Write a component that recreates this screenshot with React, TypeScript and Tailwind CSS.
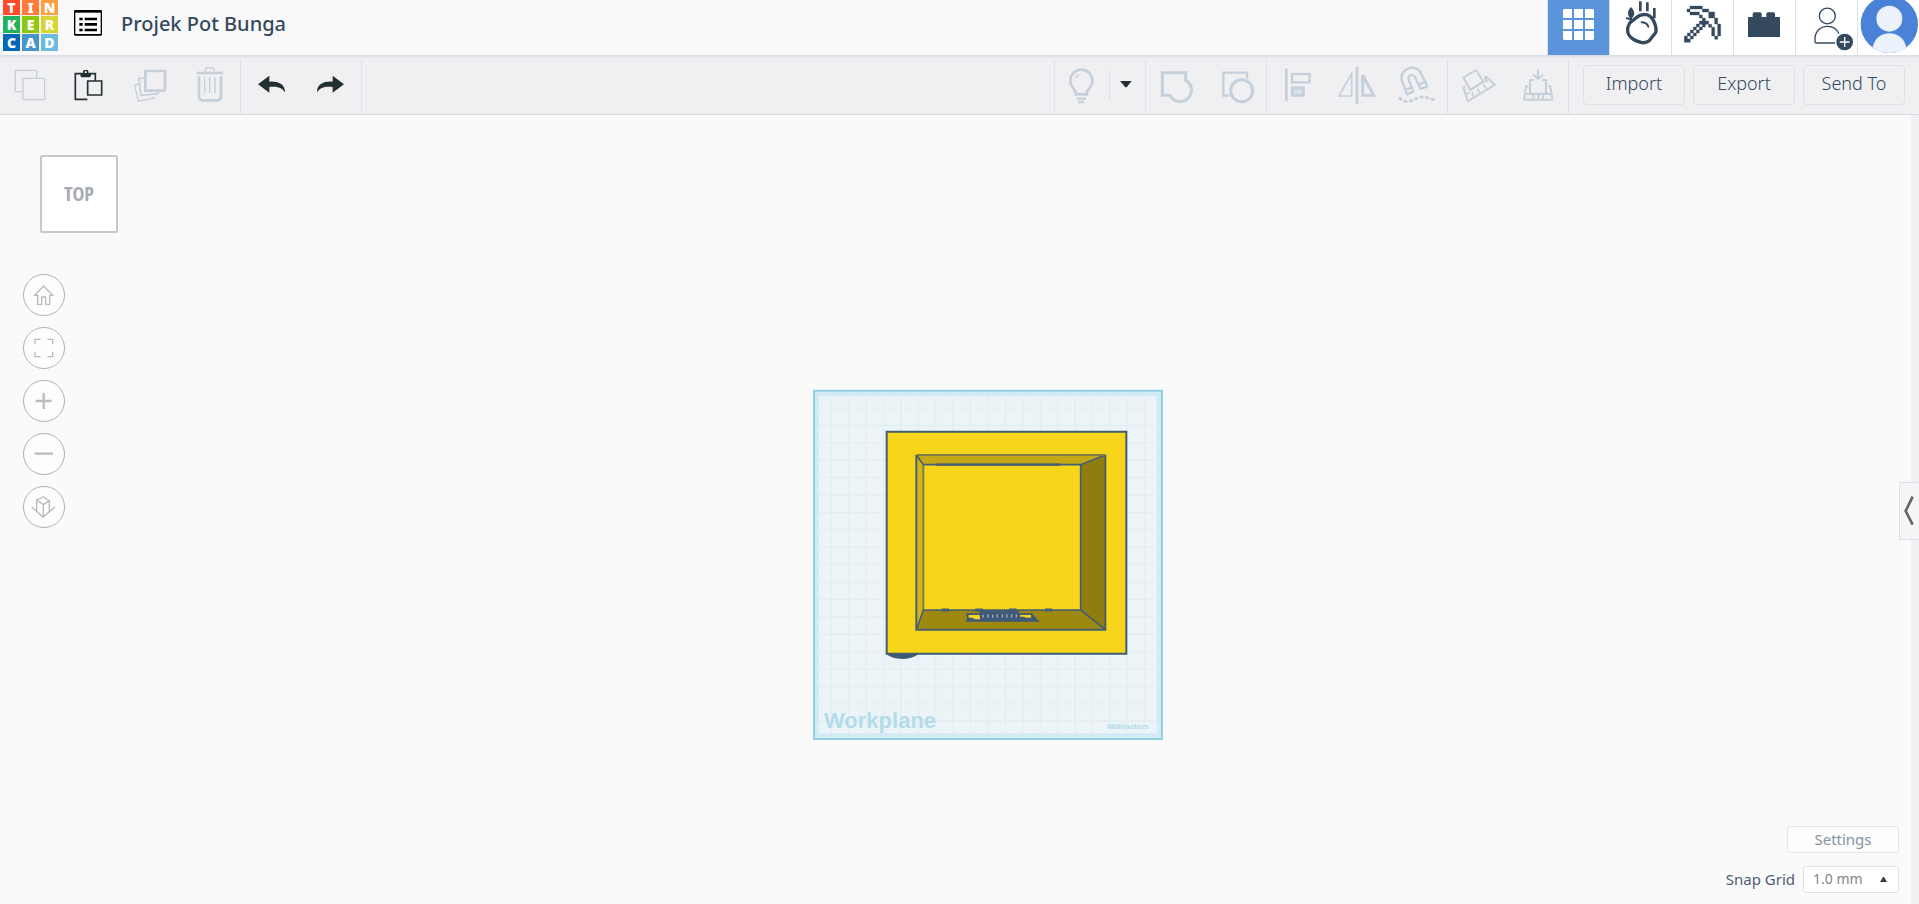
import type { ReactNode } from "react";

type ToolProps = { label: string; box: string; children: ReactNode; dark?: boolean };

function Tool({ label, box, children, dark = false }: ToolProps) {
  return (
    <button
      type="button"
      aria-label={label}
      className={`h-[59px] w-[60px] shrink-0 ${dark ? "text-[#22302f]" : "text-[#c5d0db]"}`}
    >
      <svg viewBox={box} className="h-[59px] w-[60px]" fill="none" stroke="currentColor" strokeWidth="5">
        {children}
      </svg>
    </button>
  );
}

function Group({ children, className }: { children: ReactNode; className: string }) {
  return <div className={`flex shrink-0 ${className}`}>{children}</div>;
}

function HeaderTab({ label, box, children, active = false }: { label: string; box: string; children: ReactNode; active?: boolean }) {
  return (
    <button
      type="button"
      aria-label={label}
      className={`h-[55px] w-[62px] shrink-0 border-l border-[#dcdfe8] text-[#34495e] ${active ? "bg-[#5b94da]" : "bg-white"}`}
    >
      <svg viewBox={box} className="h-[55px] w-[61px]" fill="none" stroke="currentColor">
        {children}
      </svg>
    </button>
  );
}

const logoTiles = [
  { letter: "T", color: "bg-[#ff4b2b]" },
  { letter: "I", color: "bg-[#ff7a3d]" },
  { letter: "N", color: "bg-[#ff9f40]" },
  { letter: "K", color: "bg-[#22b25c]" },
  { letter: "E", color: "bg-[#8ec80e]" },
  { letter: "R", color: "bg-[#d5d534]" },
  { letter: "C", color: "bg-[#0069b9]" },
  { letter: "A", color: "bg-[#4497ca]" },
  { letter: "D", color: "bg-[#6dbbde]" },
];

function Logo() {
  return (
    <a
      href="#home"
      aria-label="Tinkercad"
      className="ml-[3px] grid shrink-0 grid-cols-3 grid-rows-[15px_17px_17px] gap-x-[2px] gap-y-px self-start bg-[#faf0e4]"
    >
      {logoTiles.map((t) => (
        <span
          key={t.letter}
          className={`flex w-[17px] items-center justify-center font-['Noto_Sans',sans-serif] text-[14px] leading-[15px] font-black text-white ${t.color}`}
        >
          {t.letter}
        </span>
      ))}
    </a>
  );
}

function Header() {
  return (
    <header className="flex h-[55px] items-center bg-[#f9f9f9]">
      <Logo />
      <button type="button" aria-label="Designs" className="mb-[9px] ml-[16px] shrink-0">
        <svg viewBox="222 30 84 78" className="h-[26px] w-[28px]">
          <path d="M222 34a4 4 0 0 1 4-4h76a4 4 0 0 1 4 4v69a4 4 0 0 1-4 4h-76a4 4 0 0 1-4-4z" fill="#000" />
          <path d="M226 38h76v64h-76z" fill="#fff" />
          <path d="M238 53h10v8h-10zM254 53h37v8h-37zM238 69h10v8h-10zM254 69h37v8h-37zM238 86h10v8h-10zM254 86h37v8h-37z" fill="#000" />
        </svg>
      </button>
      <h1 className="mb-[7px] ml-[19px] grow text-[20px] leading-6 font-medium text-[#34495e]">Projek Pot Bunga</h1>
      <nav aria-label="Views" className="flex shrink-0">
        <HeaderTab label="3D design" box="24 0 183 165" active>
          <path
            d="M72 27h24v27H69V30zM102 27h27v27h-27zM135 27h24l3 3v24h-27zM69 60h27v27H69zM102 60h27v27h-27zM135 60h27v27h-27zM69 93h27v27H72l-3-3zM102 93h27v27h-27zM135 93h27v24l-3 3h-24z"
            fill="#fff"
            stroke="none"
          />
        </HeaderTab>
        <HeaderTab label="Sim lab" box="210 0 183 165">
          <path d="M301 4v30M322 7v27M343 24v31" strokeWidth="8" />
          <path d="M273 21c-10 10-12 21-4 32h8c8-8 8-20-4-32z" fill="currentColor" stroke="none" />
          <path d="M258 55c6-1 14 3 21 10M273 48v10" strokeWidth="6" />
          <path d="M279 61c9-5 14-17 34-18 18 0 24 11 28 20 4 8 8 20 7 31-2 9-9 12-15 22-6 9-14 13-27 12-12-2-22-6-30-13-8-6-14-15-13-28 0-8 3-12 7-19z" strokeWidth="10" />
          <path d="M305 67c10 0 17 5 20 13" strokeWidth="6" strokeLinecap="round" />
        </HeaderTab>
        <HeaderTab label="Blocks" box="36 0 183 165">
          <path
            d="M90 18h37v9H90zM81 27h9v9h-9zM90 36h28v9H90zM127 27h19v9h-19zM146 36h18v18h-18zM118 45h9v9h-9zM127 54h9v9h-9zM118 63h28v10h-28zM127 73h9v8h-9zM164 54h9v18h-9zM173 72h9v36h-9zM164 108h9v10h-9zM146 73h9v9h-9zM155 82h9v26h-9zM109 72h9v9h-9zM100 81h9v9h-9zM91 90h9v9h-9zM82 99h9v9h-9zM73 108h9v9h-9zM118 81h9v9h-9zM109 90h9v9h-9zM100 99h9v9h-9zM91 108h9v9h-9zM73 117h18v10H73z"
            fill="currentColor"
            strokeWidth="1"
          />
        </HeaderTab>
        <HeaderTab label="Bricks" box="582 0 183 165">
          <path d="M624 54q0-3 3-3h11v-9q0-5 5-5h17q5 0 5 5v9h14v-9q0-5 5-5h16q5 0 5 5v9h12q3 0 3 3v57h-96z" fill="currentColor" stroke="none" />
        </HeaderTab>
        <HeaderTab label="Invite people" box="768 0 183 165">
          <ellipse cx="862" cy="48" rx="24" ry="23.500" strokeWidth="4" />
          <path d="M884 129h-55q-4 0-4-4v-9c0-22 17-37 37-37 16 0 28 8 34 21" strokeWidth="4" strokeLinecap="round" />
          <circle cx="914" cy="126" r="25" fill="currentColor" stroke="none" />
          <path d="M899 126h30M914 111v30" stroke="#fff" strokeWidth="4" />
        </HeaderTab>
        <HeaderTab label="Account" box="954 0 183 165">
          <circle cx="1048" cy="73" r="86" fill="#4a82d8" stroke="none" />
          <circle cx="1048" cy="56" r="39" fill="#ecf2fb" stroke="none" />
          <path d="M998 142c5-26 25-42 50-42s46 16 51 42c-14 11-31 17-51 17s-37-6-50-17z" fill="#ecf2fb" stroke="none" />
        </HeaderTab>
      </nav>
    </header>
  );
}

function Toolbar() {
  return (
    <div className="relative flex h-[60px] items-stretch border-b border-[#dadce5] bg-[#f0f0f2]">
      <div className="pointer-events-none absolute inset-x-0 top-0 h-[4px] bg-linear-to-b from-[#d8dbe5] to-[#f0f0f2]" />
      <Group className="border-r border-[#dee1e8]">
        <Tool label="Copy" box="0 165 180 177">
          <path d="M68 275H46v-64h64v22M69 235h65v64H69z" strokeWidth="4" />
        </Tool>
        <Tool label="Paste" box="180 165 180 177" dark>
          <path d="M262 298h-36v-77h16M272 221h14v20M263 243h42v42h-42z" strokeWidth="5" />
          <path d="M241 218h8v-4q0-4 4-4h8q4 0 4 4v4h8v10l-4 4h-24l-4-4zM254 214v5h6v-5z" fill="currentColor" fillRule="evenodd" stroke="none" />
        </Tool>
        <Tool label="Duplicate" box="360 165 180 177">
          <path d="M436 213h59v59h-59z" strokeWidth="8" />
          <path d="M434 235h-17l6 51 52-5v-9" strokeWidth="5" />
          <path d="M417 252l-13 4 11 48 47-10v-6" strokeWidth="4" />
        </Tool>
        <Tool label="Delete" box="540 165 180 177">
          <path d="M590 219h79" strokeWidth="8" />
          <path d="M616 215v-7q0-4 5-4h17q5 0 5 4v7" strokeWidth="4" />
          <path d="M597 229v60q0 12 11 12h43q12 0 12-12v-60" strokeWidth="8" />
          <path d="M614 231v48M629 231v48M645 231v48" strokeWidth="4" />
        </Tool>
      </Group>
      <Group className="border-r border-[#dee1e8]">
        <Tool label="Undo" box="723 165 180 177" dark>
          <path d="M774 253l34-26v18c26-2 47 7 47 32-10-14-22-18-47-16v17z" fill="currentColor" stroke="none" />
        </Tool>
        <Tool label="Redo" box="903 165 180 177" dark>
          <path d="M1032 253l-34-26v18c-26-2-47 7-47 32 10-14 22-18 47-16v17z" fill="currentColor" stroke="none" />
        </Tool>
      </Group>
      <div className="grow" />
      <Group className="border-x border-[#dee1e8]">
        <button type="button" aria-label="Show all" className="h-[59px] w-[54px] text-[#c5d0db]">
          <svg viewBox="45 15 162 177" className="h-[59px] w-[54px]" fill="none" stroke="currentColor" strokeWidth="8">
            <path d="M107 133v-8c-6-9-16-17-16-33a33 33 0 0 1 66 0c0 16-10 24-16 33v8z" />
            <path d="M107 85q3-8 11-11" strokeWidth="4" />
            <path d="M110 146h28M114 156h18" strokeWidth="7" />
          </svg>
        </button>
        <button type="button" aria-label="Visibility options" className="h-[59px] w-[36px]">
          <svg viewBox="207 15 108 177" className="h-[59px] w-[36px]">
            <path d="M207 60v90" stroke="#d9dde4" strokeWidth="5" />
            <path d="M240 93h35l-15 19h-4z" fill="#22302f" />
          </svg>
        </button>
      </Group>
      <Group className="border-r border-[#dee1e8]">
        <Tool label="Group" box="318 15 180 177">
          <path d="M367 68h70v23a34 34 0 1 1-47 45h-23z" strokeWidth="9" />
        </Tool>
        <Tool label="Ungroup" box="498 15 180 177">
          <path d="M568 137h-18V68h71v18" strokeWidth="7" />
          <circle cx="605" cy="122" r="33" strokeWidth="9" />
        </Tool>
      </Group>
      <Group className="border-r border-[#dee1e8]">
        <Tool label="Align" box="681 15 180 177">
          <path d="M739 56v98" strokeWidth="8" />
          <path d="M756 72h53v25h-53z" strokeWidth="7" />
          <path d="M757 113h33v23h-33z" strokeWidth="9" fill="#d9e0e8" />
        </Tool>
        <Tool label="Mirror" box="861 15 180 177">
          <path d="M951 50v112" strokeWidth="9" />
          <path d="M935 70v68h-38z" strokeWidth="5" />
          <path d="M968 76v60h33z" strokeWidth="9" />
        </Tool>
        <Tool label="Cruise" box="21 15 180 177">
          <g strokeWidth="7" strokeLinejoin="round">
            <path d="M81 133L66 93C60 76 70 60 86 55c17-5 32 2 38 17l18 37-20 8-17-35c-5-12-24-6-19 7l14 36z" />
            <path d="M76 120l20-8M116 104l20-9" />
          </g>
          <path d="M60 145c8 9 20 12 34 7 20-9 34-18 68-2" strokeWidth="9" strokeDasharray="4 13" strokeLinecap="round" />
        </Tool>
      </Group>
      <Group className="border-r border-[#dee1e8]">
        <Tool label="Workplane" box="204 15 180 177">
          <g strokeWidth="6" strokeLinejoin="round">
            <path d="M250 83l38-23 22 35-38 24z" />
            <path d="M255 108l-4 6 12 40 82-50-26-24-5 2" />
            <path d="M257 133l12-5M267 122l42-26 14-2M276 127l5 14M292 116l9 14M309 103l11 14M321 94l-8-12" strokeWidth="5" />
          </g>
        </Tool>
        <Tool label="Drop to workplane" box="384 15 180 177">
          <g strokeWidth="6" strokeLinejoin="round">
            <path d="M462 90h-12v41h48V90h-12" />
            <path d="M445 109h-7l-6 40h85l-6-40h-7M435 132h80M460 132v16M475 132v16M489 132v16" />
          </g>
          <path d="M474 59v27M459 74l15 12 15-12" strokeWidth="6" />
        </Tool>
      </Group>
      <div className="flex shrink-0 items-center gap-[8px] px-[14px]">
        {["Import", "Export", "Send To"].map((name) => (
          <button
            key={name}
            type="button"
            className="h-[40px] w-[102px] rounded-[4px] border border-[#dfe1e5] pb-[4px] text-[18px] leading-6 font-light text-[#34495e]"
          >
            {name}
          </button>
        ))}
      </div>
    </div>
  );
}

function ViewButton({ label, box, children }: { label: string; box: string; children: ReactNode }) {
  return (
    <button type="button" aria-label={label} className="size-[42px] overflow-hidden rounded-full border border-[#afb1b5] bg-[#fdfdfd]">
      <svg viewBox={box} className="size-[40px]" fill="none" stroke="#bbbbbb" strokeWidth="4">
        {children}
      </svg>
    </button>
  );
}

function ViewControls() {
  return (
    <aside aria-label="View controls" className="absolute top-[40px] left-[23px] flex flex-col items-start">
      <button
        type="button"
        className="ml-[17px] size-[78px] rounded-[2px] border-2 border-[#c8c8c8] bg-white font-['Open_Sans_Condensed','Liberation_Sans_Narrow','Liberation_Sans',sans-serif] text-[20px] leading-6 font-bold text-[#a8abb2]"
      >
        TOP
      </button>
      <div className="mt-[41px] flex flex-col gap-[11px]">
        <ViewButton label="Home view" box="72 438 120 120">
          <path d="M104 499l27-28 27 28h-9v27h-12v-22h-12v22h-12v-27z" />
        </ViewButton>
        <ViewButton label="Fit all in view" box="72 597 120 120">
          <path d="M105 646v-15h16M142 631h16v15M158 668v15h-16M121 683h-16v-15" />
        </ViewButton>
        <ViewButton label="Zoom in" box="72 753 120 120">
          <path d="M107 813h48M131 789v48" strokeWidth="7" />
        </ViewButton>
        <ViewButton label="Zoom out" box="72 912 120 120">
          <path d="M104 971h55" strokeWidth="7" />
        </ViewButton>
        <ViewButton label="Orthographic view" box="72 1068 120 120">
          <path d="M110 1107l20-9 18 11-18 12zM110 1107v35M148 1109v33M130 1121v37" />
          <path d="M95 1128l34 30 36-30" />
        </ViewButton>
      </div>
    </aside>
  );
}

const gridSteps = Array.from({ length: 19 }, (_, i) => 42 + (i + 1) * 52.2);

function Workplane() {
  return (
    <svg viewBox="0 0 352 352" className="h-[352px] w-[352px] shrink-0" role="img" aria-label="Flower pot on the workplane">
      <g transform="translate(-12 -9) scale(0.33333)">
        <path d="M42 32h1044v1045H42z" fill="#d2ebf4" stroke="#93d0e3" strokeWidth="6" />
        <path d="M57 49h1013v1011H57z" fill="#ecf4f7" />
        <g stroke="#e2eef2" strokeWidth="4">
          {gridSteps.map((p) => (
            <path key={p} d={`M${p} 49v1011M57 ${p - 10}h1013`} />
          ))}
        </g>
        <path d="M257 820h103c-12 9-26 16-50 17-23 0-42-5-53-17z" fill="#3f5a76" />
        <path d="M260 155h719v666H260z" fill="#f6d51a" stroke="#415c73" strokeWidth="6" />
        <path d="M349 225h567l-74 29H370z" fill="#c4a815" />
        <path d="M349 225l21 29v436l-21 59z" fill="#d3b516" />
        <path d="M916 225v524l-74-59V254z" fill="#907d0f" />
        <path d="M349 749l21-59h472l74 59z" fill="#9d8910" />
        <path d="M370 254v436" stroke="#7d7f4b" strokeWidth="6" />
        <path d="M349 225l21 29h472l74-29M842 254v436l74 59M349 749l21-59h472" fill="none" stroke="#435e75" strokeWidth="5" />
        <path d="M349 225h567" stroke="#817c45" strokeWidth="6" />
        <path d="M349 225v524h567V225" fill="none" stroke="#46606e" strokeWidth="6" />
        <path d="M408 254h374" stroke="#435e75" strokeWidth="7" />
        <path d="M425 690h22M526 690h22M627 690h22M735 690h22" stroke="#435e75" strokeWidth="9" />
        <path d="M499 700h197l15 18 8 7H497l4-9z" fill="#3f5a76" />
        <path d="M506 705h34v13h-14l-10-5h-10zM660 705h33v8h-15l-6-3h-12z" fill="#f6d51a" />
        <path d="M538 691h118l4 29H540z" fill="#3f5a76" />
        <path d="M549 704v9M564 702v11M578 704v9M592 703v10M607 703v10M621 703v10M635 703v10M649 703v9" stroke="#9eacb8" strokeWidth="4" />
      </g>
      <text x="12" y="339" fill="#b3dcea" className="font-['Liberation_Sans',Arial,sans-serif] text-[22px] font-bold">
        Workplane
      </text>
      <text x="295" y="340" fill="#b3dcea" className="font-['Liberation_Sans',Arial,sans-serif] text-[8px] font-bold">
        Millimeters
      </text>
    </svg>
  );
}

function GridSettings() {
  return (
    <div className="absolute right-[20px] bottom-[11px] flex flex-col items-end gap-[13px] text-[15px] leading-5">
      <button type="button" className="h-[27px] w-[112px] rounded-[3px] border border-[#e4e5ea] bg-[#fdfdfd] pb-[2px] text-[#8492a3]">
        Settings
      </button>
      <div className="flex items-center gap-[8px]">
        <label htmlFor="snap" className="pb-[2px] text-[#4c5d70]">
          Snap Grid
        </label>
        <div className="relative">
          <select
            id="snap"
            defaultValue="1.0 mm"
            className="block h-[27px] w-[96px] appearance-none rounded-[3px] border border-[#dfe1e8] bg-white pb-[2px] pl-[9px] text-[14px] text-[#7e8888]"
          >
            <option>0.5 mm</option>
            <option>1.0 mm</option>
            <option>2.0 mm</option>
          </select>
          <svg viewBox="0 0 7 5" className="pointer-events-none absolute top-[11px] right-[12px] h-[5px] w-[7px]">
            <path d="M0 5L3 0h1l3 5z" fill="#3c3c3c" />
          </svg>
        </div>
      </div>
    </div>
  );
}

export default function App() {
  return (
    <div className="flex h-screen flex-col overflow-hidden bg-[#fafafa] font-['Noto_Sans',sans-serif]">
      <Header />
      <Toolbar />
      <div className="relative flex min-h-0 grow">
        <main className="flex min-w-0 grow items-center justify-center pt-[111px] pl-[65px]">
          <Workplane />
        </main>
        <div className="w-[8px] shrink-0 bg-[#f0f0f2]" />
        <ViewControls />
        <GridSettings />
        <div className="pointer-events-none absolute inset-y-0 right-0 flex items-center pt-[2px]">
          <button
            type="button"
            aria-label="Show shapes panel"
            className="pointer-events-auto h-[58px] w-[20px] border border-r-0 border-[#dcdfe5] bg-[#f5f5f7]"
          >
            <svg viewBox="120 70 57 168" className="h-[56px] w-[19px]" fill="none" stroke="#666666" strokeWidth="8">
              <path d="M158 111l-21 43 21 41" />
            </svg>
          </button>
        </div>
      </div>
    </div>
  );
}
